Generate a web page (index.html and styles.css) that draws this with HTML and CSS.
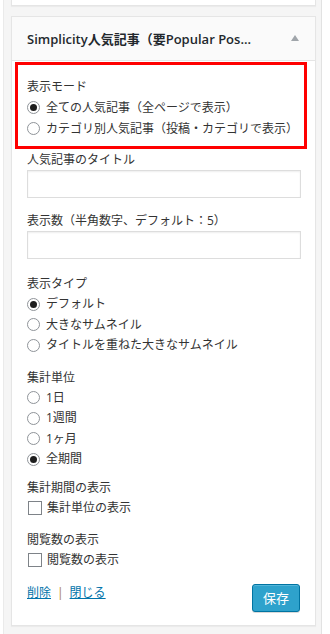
FILE: index.html
```html
<!DOCTYPE html>
<html lang="ja">
<head>
<meta charset="utf-8">
<link rel="stylesheet" href="styles.css">
</head>
<body>
<div class="sidebar">
  <div class="widget prev"></div>
  <div class="widget">
    <div class="widget-top">
      <span class="widget-title">Simplicity人気記事（要Popular Pos...</span>
      <span class="arrow"></span>
    </div>
    <div class="widget-inside">
      <div class="highlight">
        <div class="label">表示モード</div>
        <div class="opt"><span class="radio checked"></span>全ての人気記事（全ページで表示）</div>
        <div class="opt"><span class="radio"></span>カテゴリ別人気記事（投稿・カテゴリで表示）</div>
      </div>
      <div class="field first">
        <div class="label">人気記事のタイトル</div>
        <div class="input"></div>
      </div>
      <div class="field after-input">
        <div class="label">表示数（半角数字、デフォルト：5）</div>
        <div class="input"></div>
      </div>
      <div class="field after-input wide">
        <div class="label">表示タイプ</div>
        <div class="opt"><span class="radio checked"></span>デフォルト</div>
        <div class="opt"><span class="radio"></span>大きなサムネイル</div>
        <div class="opt"><span class="radio"></span>タイトルを重ねた大きなサムネイル</div>
      </div>
      <div class="field">
        <div class="label">集計単位</div>
        <div class="opt"><span class="radio"></span>1日</div>
        <div class="opt"><span class="radio"></span>1週間</div>
        <div class="opt"><span class="radio"></span>1ヶ月</div>
        <div class="opt"><span class="radio checked"></span>全期間</div>
      </div>
      <div class="field tight">
        <div class="label">集計期間の表示</div>
        <div class="opt"><span class="check"></span>集計単位の表示</div>
      </div>
      <div class="field">
        <div class="label">閲覧数の表示</div>
        <div class="opt"><span class="check"></span>閲覧数の表示</div>
      </div>
      <div class="footer">
        <div class="links"><a href="#">削除</a><span class="sep">|</span><a href="#">閉じる</a></div>
        <button class="save">保存</button>
      </div>
    </div>
  </div>
</div>
</body>
</html>
```
FILE: styles.css
```css
html, body {
  margin: 0;
  padding: 0;
  background: #fff;
}
body {
  font-family: "Open Sans", "Noto Sans CJK JP", sans-serif;
  font-size: 12px;
  color: #333;
}
.sidebar {
  margin-left: 3px;
  width: 319px;
  height: 634px;
  background: #f5f5f5;
  border-right: 1px solid #e2e2e2;
  border-left: 1px solid #eaeaea;
  padding: 0 7px 0 7px;
  box-sizing: border-box;
  overflow: hidden;
}
.widget {
  background: #fff;
  border: 1px solid #e5e5e5;
  box-shadow: 0 1px 1px rgba(0,0,0,0.04);
  width: 305px;
  box-sizing: border-box;
}
.widget.prev {
  height: 6px;
  border-top: none;
  margin-bottom: 10px;
}
.widget-top {
  height: 43px;
  background: #fafafa;
  border-bottom: 1px solid #e5e5e5;
  display: flex;
  align-items: center;
  justify-content: space-between;
  padding: 0 16px 0 15px;
}
.widget-title {
  font-size: 13px;
  font-weight: 600;
  color: #23282d;
  white-space: nowrap;
}
.arrow {
  width: 0;
  height: 0;
  border-left: 4px solid transparent;
  border-right: 4px solid transparent;
  border-bottom: 6px solid #a0a5aa;
  margin-top: -2px;
}
.widget-inside {
  padding: 0 15px 13px 15px;
}
.highlight {
  border: 3px solid #f00;
  margin: 1px -7px 1px -12px;
  padding: 12px 0 7px 9px;
}
.label {
  line-height: 20px;
  color: #333;
}
.highlight .opt {
  line-height: 21px;
}
.opt {
  line-height: 20.5px;
  display: flex;
  align-items: center;
  white-space: nowrap;
}
.radio {
  width: 13px;
  height: 13px;
  border: 1px solid #8f9499;
  border-radius: 50%;
  box-sizing: border-box;
  margin-right: 6px;
  background: #fff;
  display: flex;
  align-items: center;
  justify-content: center;
  flex: none;
}
.radio.checked::after {
  content: "";
  width: 7px;
  height: 7px;
  border-radius: 50%;
  background: #1e1e1e;
}
.check {
  width: 14px;
  height: 14px;
  border: 1px solid #7e8388;
  box-sizing: border-box;
  background: #fff;
  margin: 0 5px 0 1px;
  flex: none;
}
.field {
  margin-top: 12px;
}
.field.first {
  margin-top: 0;
}
.field.after-input {
  margin-top: 13px;
}
.field.wide {
  margin-top: 15px;
}
.field.tight {
  margin-top: 8px;
}
.input {
  height: 28px;
  border: 1px solid #ddd;
  box-shadow: inset 0 1px 2px rgba(0,0,0,0.07);
  background: #fff;
  box-sizing: border-box;
  margin-right: -1px;
}
.footer {
  margin-top: 13px;
  display: flex;
  justify-content: space-between;
  align-items: flex-start;
}
.links {
  line-height: 18px;
}
.links a {
  color: #0073aa;
  text-decoration: underline;
}
.sep {
  color: #a87b3c;
  margin: 0 6px;
}
.save {
  width: 48px;
  height: 28px;
  background: #2ea2cc;
  border: 1px solid #0074a2;
  border-radius: 3px;
  box-shadow: inset 0 1px 0 rgba(120,200,230,0.5), 0 1px 0 rgba(0,0,0,0.15);
  color: #fff;
  font-family: "Noto Sans CJK JP", sans-serif;
  font-size: 13px;
  padding: 0;
  margin-top: 0;
  margin-right: 0;
}
```
